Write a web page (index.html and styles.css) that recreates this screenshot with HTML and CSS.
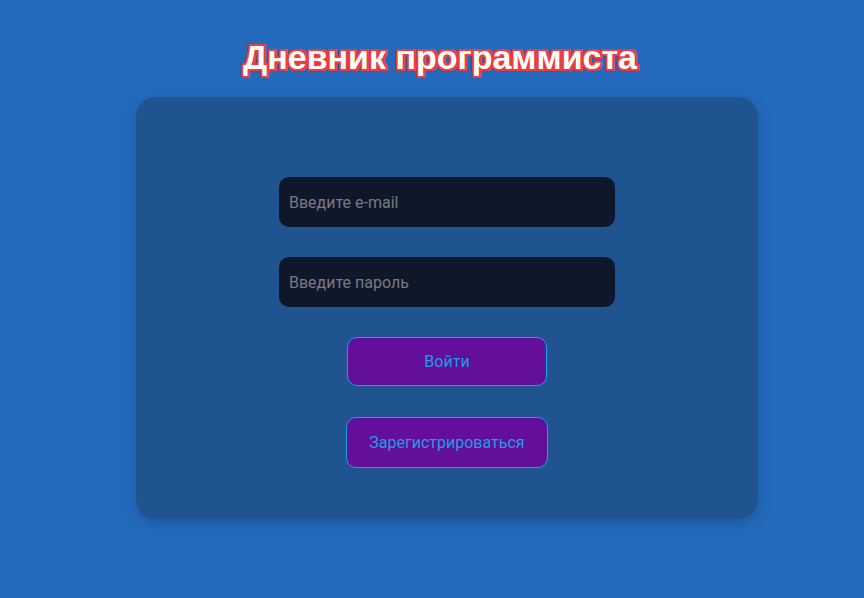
FILE: index.html
```html
<!DOCTYPE html>
<html lang="ru">
<head>
<meta charset="utf-8">
<link rel="stylesheet" href="styles.css">
</head>
<body>
<div class="page">
  <h1 class="title">Дневник программиста</h1>
  <div class="card">
    <form class="form">
      <input class="field" type="email" placeholder="Введите e-mail">
      <input class="field" type="password" placeholder="Введите пароль">
      <button class="btn btn-login" type="button">Войти</button>
      <button class="btn btn-register" type="button">Зарегистрироваться</button>
    </form>
  </div>
</div>
</body>
</html>
```
FILE: styles.css
```css
html, body {
  margin: 0;
  padding: 0;
  background: #236abd;
  height: 100%;
}
body {
  font-family: Roboto, "Liberation Sans", sans-serif;
}
.page {
  display: flex;
  flex-direction: column;
  align-items: center;
  padding-top: 37px;
  padding-left: 30px;
}
.title {
  margin: 0 0 0 -14px;
  font-family: "Liberation Sans", Arial, sans-serif;
  font-weight: bold;
  font-size: 34px;
  line-height: 40px;
  color: #ffffff;
  text-shadow:
    2px 0 0 #ef3b3b, -2px 0 0 #ef3b3b, 0 2px 0 #ef3b3b, 0 -2px 0 #ef3b3b,
    2px 2px 0 #ef3b3b, -2px -2px 0 #ef3b3b, 2px -2px 0 #ef3b3b, -2px 2px 0 #ef3b3b,
    1px 1px 3px rgba(0,0,0,0.3);
}
.card {
  margin-top: 20px;
  width: 622px;
  height: 422px;
  box-sizing: border-box;
  background: #1f5490;
  border-radius: 20px;
  box-shadow: 0 4px 14px rgba(0,0,0,0.18);
  padding-top: 80px;
}
.form {
  display: flex;
  flex-direction: column;
  align-items: center;
}
.field {
  width: 336px;
  height: 50px;
  box-sizing: border-box;
  border: none;
  border-radius: 10px;
  background: #0f172a;
  padding: 0 10px;
  font-family: Roboto, sans-serif;
  font-size: 16px;
  color: #ccc;
  margin-bottom: 30px;
  outline: none;
}
.field::placeholder {
  color: #7a7a80;
}
.btn {
  box-sizing: border-box;
  background: #640e9c;
  border: 1px solid #0ea5e9;
  border-radius: 10px;
  color: #1f9be8;
  font-family: Roboto, sans-serif;
  font-size: 16px;
  cursor: pointer;
}
.btn-login {
  width: 200px;
  height: 49px;
  margin-top: 0;
  margin-bottom: 31px;
}
.btn-register {
  width: 202px;
  height: 51px;
}
```
